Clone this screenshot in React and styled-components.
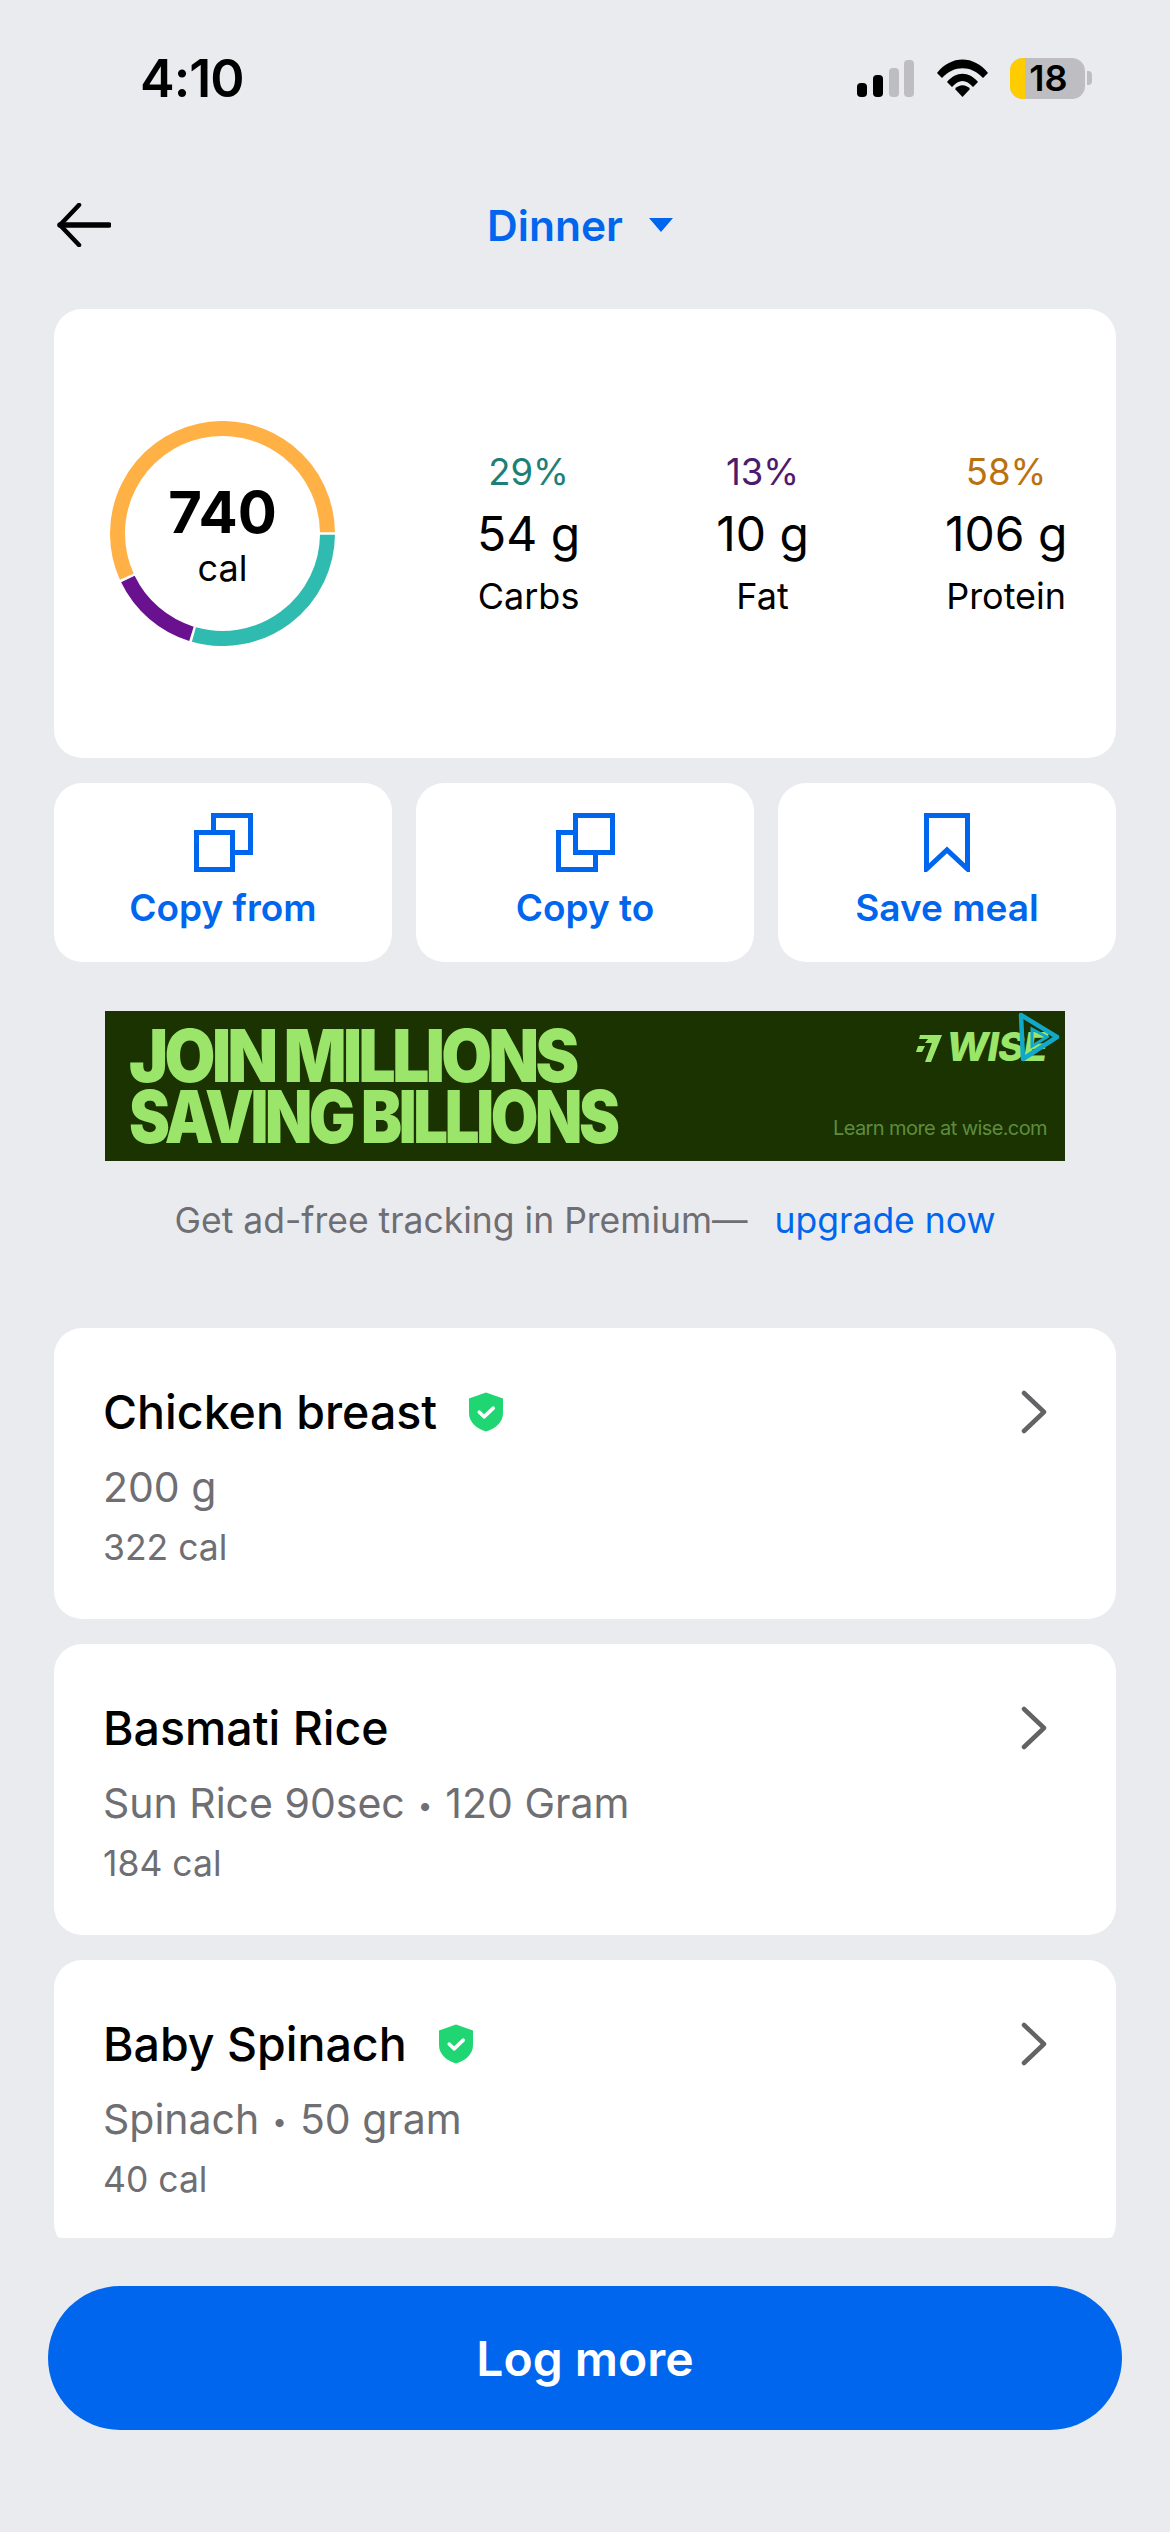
import styled, { createGlobalStyle } from "styled-components";

const BLUE = "#0066EE";
const GREY = "#6E6E73";

const GlobalStyle = createGlobalStyle`
  html, body { margin: 0; padding: 0; background: #EAEBEF; }
  body { font-family: Inter, "Liberation Sans", sans-serif; color: #000; }
  * { box-sizing: border-box; }
`;

const macros = [
  { name: "Carbs", pct: 29, grams: "54 g", color: "#1E7F78", ring: "#2FBBAF", ringEnd: 106.5 },
  { name: "Fat", pct: 13, grams: "10 g", color: "#4E1A6E", ring: "#6A1190", ringEnd: 155 },
  { name: "Protein", pct: 58, grams: "106 g", color: "#B9720F", ring: "#FFB145", ringEnd: 360 },
];

const foods = [
  { name: "Chicken breast", detail: ["200 g"], cal: "322 cal", verified: true },
  { name: "Basmati Rice", detail: ["Sun Rice 90sec", "120 Gram"], cal: "184 cal" },
  { name: "Baby Spinach", detail: ["Spinach", "50 gram"], cal: "40 cal", verified: true },
];

const arcPath = (from, to, r) => {
  const point = (deg) => {
    const a = (deg * Math.PI) / 180;
    return `${(112.5 + r * Math.cos(a)).toFixed(2)} ${(112.5 + r * Math.sin(a)).toFixed(2)}`;
  };
  return `M${point(from)} A${r} ${r} 0 ${to - from > 180 ? 1 : 0} 1 ${point(to)}`;
};

const Ring = () => {
  let start = 0;
  return (
    <svg width="225" height="225" viewBox="0 0 225 225" fill="none">
      {macros.map((m) => {
        const d = arcPath(start + 0.7, m.ringEnd - 0.7, 105);
        start = m.ringEnd;
        return <path key={m.name} d={d} stroke={m.ring} strokeWidth="15" />;
      })}
    </svg>
  );
};

const Signal = () => (
  <svg width="57" height="37" viewBox="0 0 57 37">
    <rect x="0" y="23" width="10" height="14" rx="4" fill="#000" />
    <rect x="16" y="15" width="10" height="22" rx="4" fill="#000" />
    <rect x="32" y="8" width="10" height="29" rx="4" fill="#BDBDC2" />
    <rect x="47" y="0" width="10" height="37" rx="4" fill="#BDBDC2" />
  </svg>
);

const Wifi = () => (
  <svg width="51" height="38" viewBox="0 0 51 38">
    <path d="M0 14 C14 -4 37 -4 51 14 L46 19 C34 6 17 6 5 19 Z" fill="#000" />
    <path d="M10 23 C19 12 32 12 41 23 L36 28 C29 20 22 20 15 28 Z" fill="#000" />
    <path d="M18 30 C22 25 29 25 33 30 L25.5 38 Z" fill="#000" />
  </svg>
);

const BackArrow = () => (
  <svg width="54" height="44" viewBox="0 0 54 44" fill="none" stroke="#000" strokeWidth="4.5" strokeLinecap="round" strokeLinejoin="round">
    <path d="M22 2 L3 22 L22 42" />
    <path d="M3 22 H52" strokeWidth="5.5" />
  </svg>
);

const CopyIcon = ({ front }) => (
  <svg width="59" height="59" viewBox="0 0 59 59" fill="none" stroke={BLUE} strokeWidth="5">
    {front === "lower" ? (
      <>
        <path d="M19.5 17 V2.5 H56.5 V39.5 H41" />
        <rect x="2.5" y="19.5" width="36" height="37" />
      </>
    ) : (
      <>
        <path d="M17 19.5 H2.5 V56.5 H39.5 V42" />
        <rect x="19.5" y="2.5" width="37" height="37" />
      </>
    )}
  </svg>
);

const BookmarkIcon = () => (
  <svg width="46" height="59" viewBox="0 0 46 59" fill="none" stroke={BLUE} strokeWidth="5">
    <path d="M2.5 56 V2.5 H43.5 V56 L23 37 Z" strokeLinejoin="miter" />
  </svg>
);

const Shield = () => (
  <svg width="34" height="40" viewBox="0 0 35 40">
    <path d="M17.5 0 L35 6 V21 C35 31 27 37 17.5 40 C8 37 0 31 0 21 V6 Z" fill="#1FD673" />
    <path d="M10.5 20 L15.5 25 L25 16" fill="none" stroke="#fff" strokeWidth="3.6" strokeLinecap="round" strokeLinejoin="round" />
  </svg>
);

const Chevron = () => (
  <svg width="30" height="44" viewBox="0 0 30 44" fill="none" stroke="#636366" strokeWidth="4.5" strokeLinecap="round" strokeLinejoin="round">
    <path d="M5 3 L25 22 L5 41" />
  </svg>
);

const WiseMark = () => (
  <svg width="26" height="30" viewBox="0 0 26 30" fill="#9BE56B">
    <path d="M4 3 H26 L15 30 H9 L16 11 H9 L12 7 H3 Z" />
    <path d="M2 14 L9 14 L6 20 H0 Z" />
  </svg>
);

const AdTriangle = () => (
  <svg width="44" height="52" viewBox="0 0 44 52" fill="none" stroke="#12A8C9" strokeWidth="4.5">
    <path d="M4 4 L40 26 L6 48 Z" strokeLinejoin="round" />
    <path d="M15 18 L30 26 L15 35 Z" strokeWidth="3" />
  </svg>
);

export default function App() {
  return (
    <Page>
      <GlobalStyle />
      <StatusBar>
        <Time>4:10</Time>
        <StatusIcons>
          <Signal />
          <Wifi />
          <Battery>
            <BatteryLevel />
            <BatteryText>18</BatteryText>
          </Battery>
          <BatteryCap />
        </StatusIcons>
      </StatusBar>

      <Header>
        <BackArrow />
        <MealPicker>
          Dinner
          <Caret />
        </MealPicker>
      </Header>

      <Summary>
        <RingWrap>
          <Ring />
          <RingLabel>
            <Calories>740</Calories>
            <CalUnit>cal</CalUnit>
          </RingLabel>
        </RingWrap>
        <Macros>
          {macros.map((m) => (
            <Macro key={m.name}>
              <Pct $color={m.color}>{m.pct}%</Pct>
              <Grams>{m.grams}</Grams>
              <MacroName>{m.name}</MacroName>
            </Macro>
          ))}
        </Macros>
      </Summary>

      <Actions>
        <Action>
          <CopyIcon front="lower" />
          <ActionLabel>Copy from</ActionLabel>
        </Action>
        <Action>
          <CopyIcon front="upper" />
          <ActionLabel>Copy to</ActionLabel>
        </Action>
        <Action>
          <BookmarkIcon />
          <ActionLabel>Save meal</ActionLabel>
        </Action>
      </Actions>

      <Ad>
        <AdHeadline>
          <AdLine $squeeze={0.9}>JOIN MILLIONS</AdLine>
          <AdLine $squeeze={0.843}>SAVING BILLIONS</AdLine>
        </AdHeadline>
        <AdSide>
          <WiseLogo>
            <WiseMark />
            WISE
          </WiseLogo>
          <AdLink>Learn more at wise.com</AdLink>
        </AdSide>
        <AdBadge>
          <AdTriangle />
        </AdBadge>
      </Ad>

      <Upsell>
        Get ad-free tracking in Premium—
        <UpsellLink>upgrade now</UpsellLink>
      </Upsell>

      <FoodList>
        {foods.map((f) => (
          <FoodCard key={f.name}>
            <FoodBody>
              <FoodTitle>
                {f.name}
                {f.verified && <Shield />}
              </FoodTitle>
              <FoodDetail>
                {f.detail[0]}
                {f.detail[1] && <Dot>•</Dot>}
                {f.detail[1]}
              </FoodDetail>
              <FoodCal>{f.cal}</FoodCal>
            </FoodBody>
            <ChevronSlot>
              <Chevron />
            </ChevronSlot>
          </FoodCard>
        ))}
      </FoodList>

      <LogButton>Log more</LogButton>
    </Page>
  );
}

const Page = styled.div`
  width: 1170px;
  height: 2532px;
  overflow: hidden;
  background: #eaebef;
  display: flex;
  flex-direction: column;
`;
const StatusBar = styled.div`
  height: 156px;
  padding: 0 78px 0 140px;
  display: flex;
  align-items: center;
  justify-content: space-between;
`;
const Time = styled.div`
  font-size: 52px;
  font-weight: 600;
  letter-spacing: -1px;
`;
const StatusIcons = styled.div`
  display: flex;
  align-items: center;
  gap: 23px;
`;
const Battery = styled.div`
  position: relative;
  width: 75px;
  height: 41px;
  border-radius: 13px;
  background: #bdbdc2;
  overflow: hidden;
  display: flex;
  align-items: center;
  justify-content: center;
  margin-left: -1px;
`;
const BatteryLevel = styled.div`
  position: absolute;
  left: 0;
  top: 0;
  bottom: 0;
  width: 15px;
  background: #fc0;
`;
const BatteryText = styled.span`
  position: relative;
  font-size: 36px;
  font-weight: 600;
  margin-left: 2px;
`;
const BatteryCap = styled.div`
  width: 5px;
  height: 14px;
  margin-left: -21px;
  border-radius: 0 4px 4px 0;
  background: #bdbdc2;
`;
const Header = styled.div`
  height: 138px;
  padding: 0 67px 0 57px;
  display: grid;
  grid-template-columns: 1fr auto 1fr;
  align-items: center;
`;
const MealPicker = styled.div`
  grid-column: 2;
  display: flex;
  align-items: center;
  gap: 26px;
  color: ${BLUE};
  font-size: 42.5px;
  font-weight: 600;
`;
const Caret = styled.span`
  width: 0;
  height: 0;
  border-left: 12px solid transparent;
  border-right: 12px solid transparent;
  border-top: 14px solid ${BLUE};
`;
const Summary = styled.div`
  margin: 15px 54px 0;
  height: 449px;
  padding-left: 56px;
  border-radius: 28px;
  background: #fff;
  display: flex;
  align-items: center;
`;
const RingWrap = styled.div`
  position: relative;
  width: 225px;
  height: 225px;
  flex: none;
  svg {
    display: block;
  }
`;
const RingLabel = styled.div`
  position: absolute;
  inset: 2px 0 0;
  display: flex;
  flex-direction: column;
  align-items: center;
  justify-content: center;
`;
const Calories = styled.div`
  font-size: 58px;
  font-weight: 700;
  line-height: 66px;
`;
const CalUnit = styled.div`
  font-size: 36px;
  line-height: 46px;
`;
const Macros = styled.div`
  margin-left: 142px;
  display: flex;
  gap: 136px;
`;
const Macro = styled.div`
  display: flex;
  flex-direction: column;
  align-items: center;
  white-space: nowrap;
`;
const Pct = styled.div`
  font-size: 36.5px;
  line-height: 62px;
  color: ${(p) => p.$color};
`;
const Grams = styled.div`
  font-size: 48px;
  line-height: 62px;
`;
const MacroName = styled.div`
  font-size: 36px;
  line-height: 62px;
`;
const Actions = styled.div`
  margin: 25px 54px 0;
  display: grid;
  grid-template-columns: repeat(3, 1fr);
  gap: 24px;
`;
const Action = styled.div`
  height: 179px;
  padding-top: 30px;
  border-radius: 28px;
  background: #fff;
  display: flex;
  flex-direction: column;
  align-items: center;
`;
const ActionLabel = styled.div`
  margin-top: 14px;
  color: ${BLUE};
  font-size: 37px;
  line-height: 44px;
  font-weight: 600;
`;
const Ad = styled.div`
  position: relative;
  margin: 49px 105px 0;
  height: 150px;
  padding: 0 18px 0 24px;
  background: #1a3300;
  display: flex;
  justify-content: space-between;
  align-items: center;
`;
const AdHeadline = styled.div`
  color: #9be56b;
  font-size: 73px;
  font-weight: 900;
  line-height: 61px;
  letter-spacing: -4px;
  white-space: nowrap;
`;
const AdLine = styled.div`
  width: 0;
  transform: scaleX(${(p) => p.$squeeze});
  transform-origin: left center;
`;
const AdSide = styled.div`
  align-self: stretch;
  padding: 18px 0 20px;
  display: flex;
  flex-direction: column;
  align-items: flex-end;
  justify-content: space-between;
`;
const WiseLogo = styled.div`
  display: flex;
  align-items: center;
  gap: 4px;
  color: #9be56b;
  font-size: 40px;
  font-weight: 800;
  font-style: italic;
  line-height: 36px;
  letter-spacing: -1px;
`;
const AdLink = styled.div`
  color: #5f8c3f;
  font-size: 20px;
  line-height: 26px;
  letter-spacing: -0.6px;
`;
const AdBadge = styled.div`
  position: absolute;
  top: 0;
  right: 4px;
`;
const Upsell = styled.div`
  height: 118px;
  display: flex;
  align-items: center;
  justify-content: center;
  gap: 27px;
  color: ${GREY};
  font-size: 35.5px;
`;
const UpsellLink = styled.span`
  color: ${BLUE};
`;
const FoodList = styled.div`
  margin: 49px 54px 0;
  height: 910px;
  overflow: hidden;
  border-radius: 0 0 8px 8px;
  display: flex;
  flex-direction: column;
  gap: 25px;
`;
const FoodCard = styled.div`
  flex: none;
  height: 291px;
  padding: 56px 67px 0 49px;
  border-radius: 28px;
  background: #fff;
  display: flex;
  justify-content: space-between;
  align-items: flex-start;
`;
const FoodBody = styled.div`
  display: flex;
  flex-direction: column;
`;
const FoodTitle = styled.div`
  display: flex;
  align-items: center;
  gap: 32px;
  font-size: 46.5px;
  font-weight: 500;
  line-height: 56px;
`;
const FoodDetail = styled.div`
  margin-top: 15px;
  height: 64px;
  color: ${GREY};
  font-size: 41px;
  line-height: 64px;
`;
const Dot = styled.span`
  margin: 0 13px;
  font-size: 26px;
  line-height: 0;
  vertical-align: 3px;
`;
const FoodCal = styled.div`
  margin-top: 1px;
  color: ${GREY};
  font-size: 35.5px;
  line-height: 56px;
`;
const ChevronSlot = styled.div`
  height: 56px;
  display: flex;
  align-items: center;
`;
const LogButton = styled.div`
  margin: 48px 48px 0;
  height: 144px;
  border-radius: 72px;
  background: ${BLUE};
  color: #fff;
  font-size: 48px;
  font-weight: 600;
  display: flex;
  align-items: center;
  justify-content: center;
`;
